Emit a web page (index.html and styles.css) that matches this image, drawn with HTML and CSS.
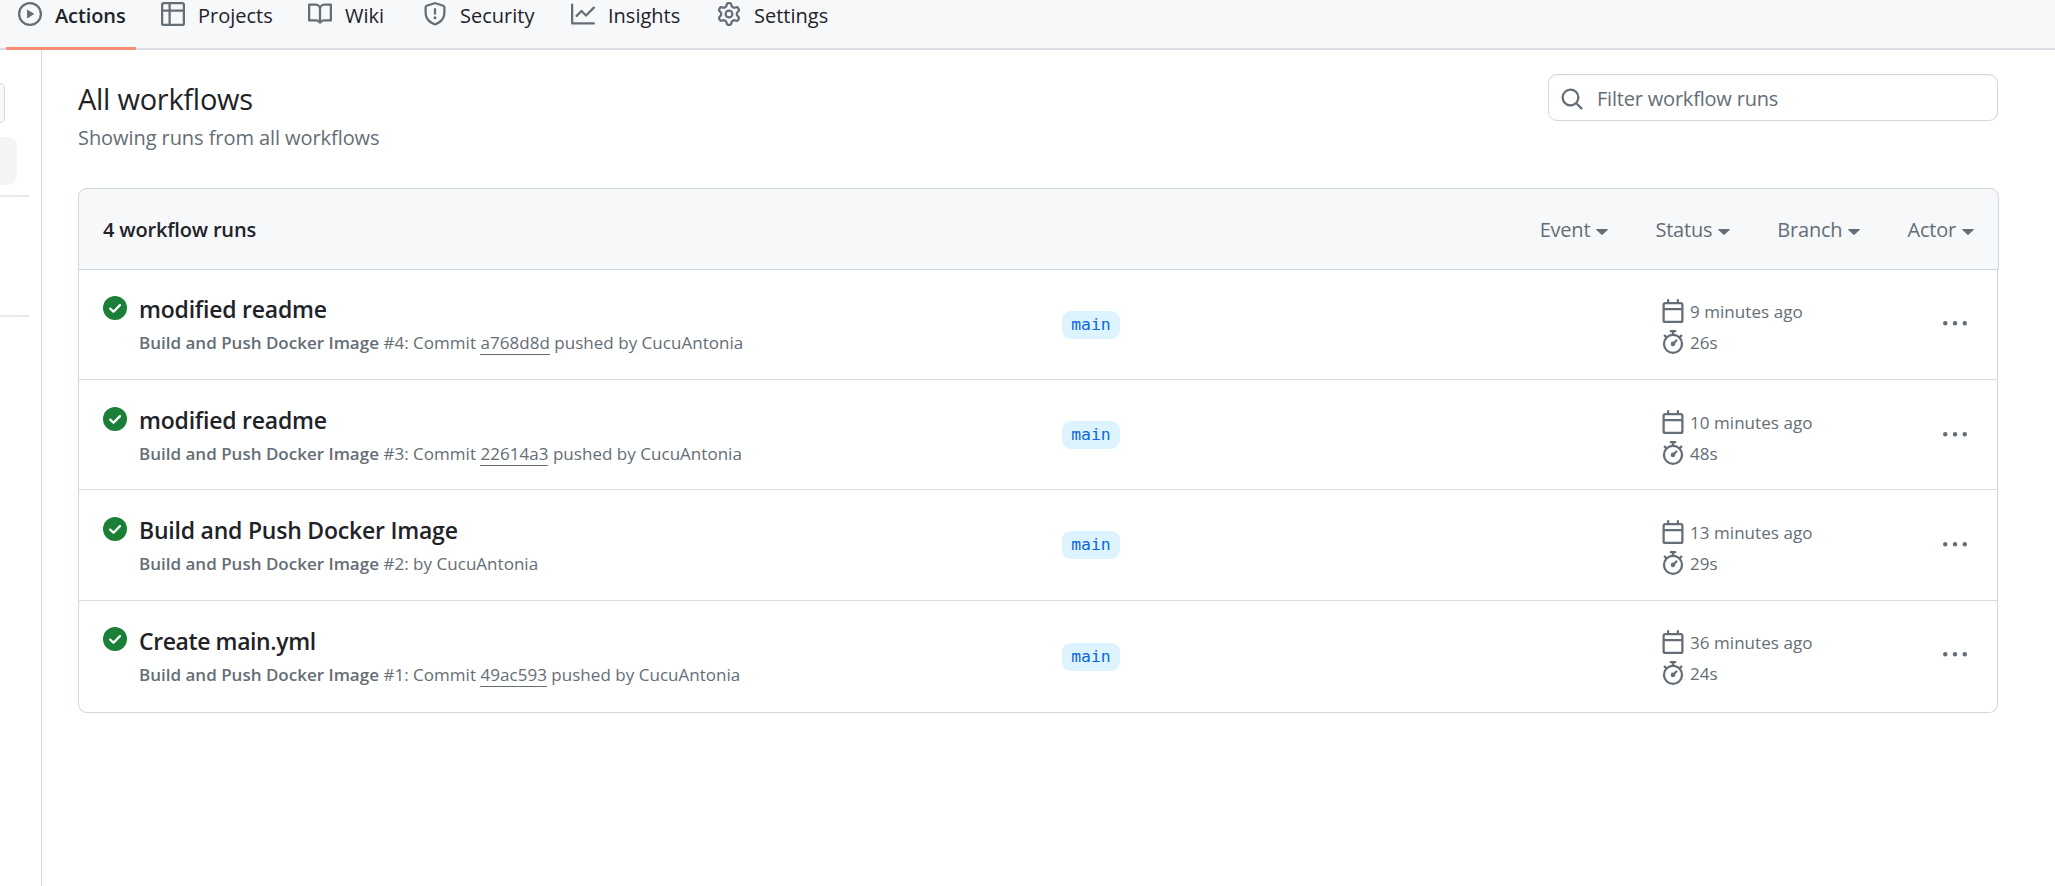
FILE: index.html
```html
<!DOCTYPE html>
<html lang="en">
<head>
<meta charset="utf-8">
<title>All workflows</title>
<link rel="stylesheet" href="styles.css">
</head>
<body>
<svg class="sprite" width="0" height="0" aria-hidden="true">
  <symbol id="check" viewBox="0 0 16 16"><circle cx="8" cy="8" r="8" fill="#1a7f37"/><path d="M4.8 8.4 7 10.5 11.3 6.1" fill="none" stroke="#fff" stroke-width="1.5" stroke-linecap="round" stroke-linejoin="round"/></symbol>
  <symbol id="calendar" viewBox="0 0 16 16"><path d="M4.75 0a.75.75 0 0 1 .75.75V2h5V.75a.75.75 0 0 1 1.5 0V2h1.25c.966 0 1.75.784 1.75 1.75v10.5A1.75 1.75 0 0 1 13.25 16H2.75A1.75 1.75 0 0 1 1 14.25V3.75C1 2.784 1.784 2 2.75 2H4V.75A.75.75 0 0 1 4.75 0ZM2.5 7.5v6.75c0 .138.112.25.25.25h10.5a.25.25 0 0 0 .25-.25V7.5Zm10.75-4H2.75a.25.25 0 0 0-.25.25V6h11V3.75a.25.25 0 0 0-.25-.25Z"/></symbol>
  <symbol id="stopwatch" viewBox="0 0 16 16"><path d="M5.75.75A.75.75 0 0 1 6.5 0h3a.75.75 0 0 1 0 1.5h-.75v1l-.001.041a6.724 6.724 0 0 1 3.464 1.435l.007-.006.75-.75a.749.749 0 0 1 1.275.326.749.749 0 0 1-.215.734l-.75.75-.006.007a6.75 6.75 0 1 1-10.548 0L2.72 5.03l-.75-.75a.751.751 0 0 1 .018-1.042.751.751 0 0 1 1.042-.018l.75.75.007.006A6.72 6.72 0 0 1 7.25 2.541V1.5H6.5a.75.75 0 0 1-.75-.75ZM8 14.5a5.25 5.25 0 1 0-.001-10.501A5.25 5.25 0 0 0 8 14.5Zm.389-6.7 1.33-1.33a.75.75 0 1 1 1.061 1.06L9.45 8.861A1.503 1.503 0 0 1 8 10.75a1.499 1.499 0 1 1 .389-2.95Z"/></symbol>
  <symbol id="kebab" viewBox="0 0 16 16"><path d="M8 9a1.5 1.5 0 1 0 0-3 1.5 1.5 0 0 0 0 3ZM1.5 9a1.5 1.5 0 1 0 0-3 1.5 1.5 0 0 0 0 3Zm13 0a1.5 1.5 0 1 0 0-3 1.5 1.5 0 0 0 0 3Z"/></symbol>
  <symbol id="caret" viewBox="0 0 12 6"><path d="M.6 0h10.8c.5 0 .7.5.4.8L6.4 5.8a.6.6 0 0 1-.8 0L.2.8C-.1.5.1 0 .6 0Z"/></symbol>
</svg>

<nav class="tabs">
  <a class="tab tab-current"><svg class="icon" viewBox="0 0 16 16"><path d="M8 0a8 8 0 1 1 0 16A8 8 0 0 1 8 0ZM1.5 8a6.5 6.5 0 1 0 13 0 6.5 6.5 0 0 0-13 0Zm4.879-2.773 4.264 2.559a.25.25 0 0 1 0 .428l-4.264 2.559A.25.25 0 0 1 6 10.559V5.442a.25.25 0 0 1 .379-.215Z"/></svg><span>Actions</span></a>
  <a class="tab"><svg class="icon" viewBox="0 0 16 16"><path d="M0 1.75C0 .784.784 0 1.75 0h12.5C15.216 0 16 .784 16 1.75v12.5A1.75 1.75 0 0 1 14.25 16H1.75A1.75 1.75 0 0 1 0 14.25ZM6.5 6.5v8h7.75a.25.25 0 0 0 .25-.25V6.5Zm8-1.5V1.75a.25.25 0 0 0-.25-.25H6.5V5Zm-13 1.5v7.75c0 .138.112.25.25.25H5v-8ZM5 5V1.500H1.750a.25.25 0 0 0-.25.25V5Z"/></svg><span>Projects</span></a>
  <a class="tab"><svg class="icon" viewBox="0 0 16 16"><path d="M0 1.75A.75.75 0 0 1 .75 1h4.253c1.227 0 2.317.59 3 1.501A3.743 3.743 0 0 1 11.006 1h4.245a.75.75 0 0 1 .75.75v10.5a.75.75 0 0 1-.75.75h-4.507a2.25 2.25 0 0 0-1.591.659l-.622.621a.75.75 0 0 1-1.06 0l-.622-.621A2.25 2.25 0 0 0 5.258 13H.75a.75.75 0 0 1-.75-.75Zm7.251 10.324.004-5.073-.002-2.253A2.25 2.25 0 0 0 5.003 2.500H1.500v9h3.757a3.75 3.75 0 0 1 1.994.574ZM8.755 4.750l-.004 7.322a3.752 3.752 0 0 1 1.992-.572H14.500v-9h-3.495a2.250 2.250 0 0 0-2.250 2.250Z"/></svg><span>Wiki</span></a>
  <a class="tab"><svg class="icon" viewBox="0 0 16 16"><path d="M7.467.133a1.748 1.748 0 0 1 1.066 0l5.250 1.680A1.750 1.750 0 0 1 15 3.480V7c0 1.566-.320 3.182-1.303 4.682-.983 1.498-2.585 2.813-5.032 3.855a1.697 1.697 0 0 1-1.330 0c-2.447-1.042-4.049-2.357-5.032-3.855C1.320 10.182 1 8.566 1 7V3.480a1.750 1.750 0 0 1 1.217-1.667Zm.610 1.429a.250.250 0 0 0-.153 0l-5.250 1.680a.250.250 0 0 0-.174.238V7c0 1.358.275 2.666 1.057 3.860.784 1.194 2.121 2.340 4.366 3.297a.196.196 0 0 0 .154 0c2.245-.956 3.582-2.104 4.366-3.298C13.225 9.666 13.500 8.360 13.500 7V3.480a.251.251 0 0 0-.174-.237ZM8.750 4.750v3a.750.750 0 0 1-1.500 0v-3a.750.750 0 0 1 1.500 0ZM9 10.500a1 1 0 1 1-2 0 1 1 0 0 1 2 0Z"/></svg><span>Security</span></a>
  <a class="tab"><svg class="icon" viewBox="0 0 16 16"><path d="M1.500 1.750V13.500h13.750a.750.750 0 0 1 0 1.500H.750a.750.750 0 0 1-.750-.750V1.750a.750.750 0 0 1 1.500 0Zm14.280 2.530-5.250 5.250a.750.750 0 0 1-1.060 0L7 7.060 4.280 9.780a.751.751 0 0 1-1.042-.018.751.751 0 0 1-.018-1.042l3.250-3.250a.750.750 0 0 1 1.060 0L10 7.940l4.720-4.720a.751.751 0 0 1 1.042.018.751.751 0 0 1 .018 1.042Z"/></svg><span>Insights</span></a>
  <a class="tab"><svg class="icon" viewBox="0 0 16 16"><path d="M8 0a8.200 8.200 0 0 1 .701.031C9.444.095 9.990.645 10.160 1.290l.288 1.107c.018.066.079.158.212.224.231.114.454.243.668.386.123.082.233.090.299.071l1.103-.303c.644-.176 1.392.021 1.820.630.270.385.506.792.704 1.218.315.675.111 1.422-.364 1.891l-.814.806c-.049.048-.098.147-.088.294.016.257.016.515 0 .772-.010.147.038.246.088.294l.814.806c.475.469.679 1.216.364 1.891a7.977 7.977 0 0 1-.704 1.217c-.428.610-1.176.807-1.820.630l-1.102-.302c-.067-.019-.177-.011-.300.071a5.909 5.909 0 0 1-.668.386c-.133.066-.194.158-.211.224l-.290 1.106c-.168.646-.715 1.196-1.458 1.260a8.006 8.006 0 0 1-1.402 0c-.743-.064-1.289-.614-1.458-1.260l-.289-1.106c-.018-.066-.079-.158-.212-.224a5.738 5.738 0 0 1-.668-.386c-.123-.082-.233-.090-.299-.071l-1.103.303c-.644.176-1.392-.021-1.820-.630a8.120 8.120 0 0 1-.704-1.218c-.315-.675-.111-1.422.363-1.891l.815-.806c.050-.048.098-.147.088-.294a6.214 6.214 0 0 1 0-.772c.010-.147-.038-.246-.088-.294l-.815-.806C.635 6.045.431 5.298.746 4.623a7.920 7.920 0 0 1 .704-1.217c.428-.610 1.176-.807 1.820-.630l1.102.302c.067.019.177.011.300-.071.214-.143.437-.272.668-.386.133-.066.194-.158.211-.224l.290-1.106C6.009.645 6.556.095 7.299.030 7.530.010 7.764 0 8 0Zm-.571 1.525c-.036.003-.108.036-.137.146l-.289 1.105c-.147.561-.549.967-.998 1.189-.173.086-.340.183-.500.290-.417.278-.970.423-1.529.270l-1.103-.303c-.109-.030-.175.016-.195.045-.220.312-.412.644-.573.990-.014.031-.021.110.059.190l.815.806c.411.406.562.957.530 1.456a4.709 4.709 0 0 0 0 .582c.032.499-.119 1.050-.530 1.456l-.815.806c-.081.080-.073.159-.059.190.162.346.353.677.573.989.020.030.085.076.195.046l1.102-.303c.560-.153 1.113-.008 1.530.270.161.107.328.204.501.290.447.222.850.629.997 1.189l.289 1.105c.029.109.101.143.137.146a6.600 6.600 0 0 0 1.142 0c.036-.003.108-.036.137-.146l.289-1.105c.147-.561.549-.967.998-1.189.173-.086.340-.183.500-.290.417-.278.970-.423 1.529-.270l1.103.303c.109.029.175-.016.195-.045.220-.313.411-.644.573-.990.014-.031.021-.110-.059-.190l-.815-.806c-.411-.406-.562-.957-.530-1.456a4.709 4.709 0 0 0 0-.582c-.032-.499.119-1.050.530-1.456l.815-.806c.081-.080.073-.159.059-.190a6.464 6.464 0 0 0-.573-.989c-.020-.030-.085-.076-.195-.046l-1.102.303c-.560.153-1.113.008-1.530-.270a4.440 4.440 0 0 0-.501-.290c-.447-.222-.850-.629-.997-1.189l-.289-1.105c-.029-.110-.101-.143-.137-.146a6.600 6.600 0 0 0-1.142 0ZM11 8a3 3 0 1 1-6 0 3 3 0 0 1 6 0ZM9.500 8a1.500 1.500 0 1 0-3.001.001A1.500 1.500 0 0 0 9.500 8Z"/></svg><span>Settings</span></a>
</nav>

<div class="layout">
  <aside class="side">
    <div class="side-button"></div>
    <div class="side-selected"></div>
    <div class="side-rule"></div>
    <div class="side-rule side-rule-second"></div>
  </aside>

  <main class="main">
    <header class="page-head">
      <div>
        <h1 class="title">All workflows</h1>
        <p class="subtitle">Showing runs from all workflows</p>
      </div>
      <div class="search">
        <svg class="icon search-icon" viewBox="0 0 16 16"><path d="M10.680 11.740a6 6 0 0 1-7.922-8.982 6 6 0 0 1 8.982 7.922l3.040 3.040a.749.749 0 0 1-.326 1.275.749.749 0 0 1-.734-.215ZM11.500 7a4.499 4.499 0 1 0-8.997 0A4.499 4.499 0 0 0 11.500 7Z"/></svg>
        <span class="placeholder">Filter workflow runs</span>
      </div>
    </header>

    <div class="list-head">
      <strong class="count">4 workflow runs</strong>
      <div class="filters">
        <span class="filter">Event<svg class="caret"><use href="#caret"/></svg></span>
        <span class="filter">Status<svg class="caret"><use href="#caret"/></svg></span>
        <span class="filter">Branch<svg class="caret"><use href="#caret"/></svg></span>
        <span class="filter">Actor<svg class="caret"><use href="#caret"/></svg></span>
      </div>
    </div>

    <div class="rows">
      <div class="row">
        <div class="run"><svg class="icon status"><use href="#check"/></svg><div><div class="run-title">modified readme</div><div class="run-info"><b>Build and Push Docker Image</b> #4: Commit <a class="commit">a768d8d</a> pushed by CucuAntonia</div></div></div>
        <div class="branch"><span class="badge">main</span></div>
        <div class="times"><div class="time"><svg class="icon"><use href="#calendar"/></svg>9 minutes ago</div><div class="time"><svg class="icon"><use href="#stopwatch"/></svg>26s</div></div>
        <svg class="icon kebab"><use href="#kebab"/></svg>
      </div>
      <div class="row">
        <div class="run"><svg class="icon status"><use href="#check"/></svg><div><div class="run-title">modified readme</div><div class="run-info"><b>Build and Push Docker Image</b> #3: Commit <a class="commit">22614a3</a> pushed by CucuAntonia</div></div></div>
        <div class="branch"><span class="badge">main</span></div>
        <div class="times"><div class="time"><svg class="icon"><use href="#calendar"/></svg>10 minutes ago</div><div class="time"><svg class="icon"><use href="#stopwatch"/></svg>48s</div></div>
        <svg class="icon kebab"><use href="#kebab"/></svg>
      </div>
      <div class="row">
        <div class="run"><svg class="icon status"><use href="#check"/></svg><div><div class="run-title">Build and Push Docker Image</div><div class="run-info"><b>Build and Push Docker Image</b> #2: by CucuAntonia</div></div></div>
        <div class="branch"><span class="badge">main</span></div>
        <div class="times"><div class="time"><svg class="icon"><use href="#calendar"/></svg>13 minutes ago</div><div class="time"><svg class="icon"><use href="#stopwatch"/></svg>29s</div></div>
        <svg class="icon kebab"><use href="#kebab"/></svg>
      </div>
      <div class="row">
        <div class="run"><svg class="icon status"><use href="#check"/></svg><div><div class="run-title run-title-tight">Create main.yml</div><div class="run-info"><b>Build and Push Docker Image</b> #1: Commit <a class="commit">49ac593</a> pushed by CucuAntonia</div></div></div>
        <div class="branch"><span class="badge">main</span></div>
        <div class="times"><div class="time"><svg class="icon"><use href="#calendar"/></svg>36 minutes ago</div><div class="time"><svg class="icon"><use href="#stopwatch"/></svg>24s</div></div>
        <svg class="icon kebab"><use href="#kebab"/></svg>
      </div>
    </div>
  </main>
</div>
</body>
</html>
```
FILE: styles.css
```css
* { box-sizing: border-box; }
body {
  margin: 0;
  height: 886px;
  overflow: hidden;
  display: flex;
  flex-direction: column;
  background: #fff;
  color: #1f2328;
  font: 400 20px/30px "Open Sans", sans-serif;
}
h1, p { margin: 0; }
.sprite { position: absolute; }
.icon { width: 24px; height: 24px; flex: none; fill: #656d76; display: block; }

/* Repository tabs */
.tabs {
  height: 50px;
  flex: none;
  padding-left: 6px;
  display: grid;
  grid-template-columns: 143px 147px 115px 148px 146px auto;
  background: #f6f8fa;
  border-bottom: 2px solid #d8dee4;
}
.tab { display: flex; gap: 13px; height: 50px; padding: 2px 0 0 12px; width: max-content; }
.tab span { line-height: 28px; }
.tab-current { font-weight: 600; width: 130px; border-bottom: 3px solid #fd8c73; letter-spacing: -.1px; }

/* Columns */
.layout { flex: 1; display: flex; }
.side { width: 42px; flex: none; border-right: 1px solid #d0d7de; padding-top: 33px; }
.side-button { width: 5px; height: 40px; background: #f6f8fa; border: 1px solid #d5d8da; border-left: 0; border-radius: 0 9px 9px 0; }
.side-selected { width: 17px; height: 48px; margin-top: 14px; background: #f3f4f6; border-radius: 0 9px 9px 0; }
.side-rule { width: 29px; height: 2px; margin-top: 10px; background: #e6eaef; }
.side-rule-second { margin-top: 118px; }

.main { width: 1956px; padding: 24px 0 0 36px; }
.page-head { display: flex; justify-content: space-between; height: 114px; }
.title { font-size: 29px; line-height: 44px; font-weight: 400; letter-spacing: -.27px; margin-top: 3px; }
.subtitle { color: #656d76; margin-top: 2px; letter-spacing: -.07px; }
.search { width: 450px; height: 47px; border: 1px solid #d0d7de; border-radius: 9px; display: flex; align-items: center; padding-left: 11px; box-shadow: inset 0 1px 0 rgba(208, 215, 222, .2); color: #656d76; }
.search-icon { margin-top: 2px; }
.placeholder { margin: 3px 0 0 13px; letter-spacing: -.2px; }

/* Run list */
.list-head {
  height: 82px;
  margin: 0 -1px -.67px 0;
  padding: 2px 24px 0;
  display: flex;
  justify-content: space-between;
  align-items: center;
  background: #f6f8fa;
  border: 1px solid #d0d7de;
  border-radius: 9px 9px 0 0;
}
.count { font-weight: 600; letter-spacing: -.17px; }
.filters { display: flex; gap: 47px; color: #656d76; letter-spacing: -.2px; }
.filter { display: flex; align-items: center; }
.caret { width: 12px; height: 6px; margin: 3px 0 0 6px; fill: #656d76; }

.rows { border: 1px solid #d0d7de; border-top: 0; border-radius: 0 0 9px 9px; }
.row {
  height: 110.67px;
  padding: 0 0 0 24px;
  display: grid;
  grid-template-columns: 959px 599px 282px auto;
  border-bottom: 1px solid #d8dee4;
}
.row:nth-child(2) { height: 110px; }
.row:last-child { height: 111.34px; border-bottom: 0; }
.run { display: flex; gap: 12px; padding-top: 22px; }
.status { margin-top: 4.67px; }
.run-title { font-size: 23px; line-height: 36px; font-weight: 600; letter-spacing: -.22px; }
.run-title-tight { letter-spacing: -.4px; }
.run-info { font-size: 17px; line-height: 27px; margin-top: 2px; color: #656d76; letter-spacing: .03px; }
.run-info b { font-weight: 600; letter-spacing: 0; }
.commit { border-bottom: 1px solid #656d76; }
.branch { align-self: center; display: flex; margin-top: 1px; }
.badge { width: 58px; height: 28px; border-radius: 9px; background: #ddf4ff; color: #0969da; font: 16.4px/28px "DejaVu Sans Mono", monospace; text-align: center; }
.times { padding-top: 26.67px; font-size: 17px; color: #656d76; letter-spacing: .05px; }
.time { display: flex; align-items: center; gap: 5px; line-height: 31px; }
.time .icon { margin-top: -1px; }
.kebab { margin-top: 42.5px; }
```
